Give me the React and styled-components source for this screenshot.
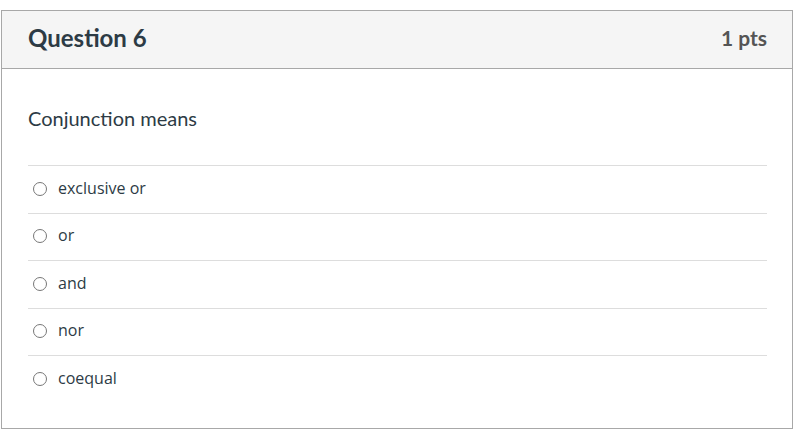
import React from 'react'
import styled, { createGlobalStyle } from 'styled-components'

const Global = createGlobalStyle`
  body {
    margin: 0;
    background: #fff;
    font-family: Lato, "Open Sans", sans-serif;
    color: #2d3b45;
  }
`

const Card = styled.div`
  margin: 10px 0 0 1px;
  width: 790px;
  border: 1px solid #a8a8a8;
`

const Header = styled.div`
  height: 57px;
  background: #f5f5f5;
  border-bottom: 1px solid #a8a8a8;
  display: flex;
  align-items: center;
  justify-content: space-between;
  padding: 0 25px 0 26px;
`

const Title = styled.h2`
  margin: 0 0 4px;
  font-size: 24px;
  font-weight: 700;
  color: #2d3b45;
`

const Points = styled.span`
  font-size: 21px;
  font-weight: 700;
  color: #555;
  margin-bottom: 4px;
`

const Body = styled.div`
  padding: 37px 25px 25px 26px;
`

const Question = styled.p`
  margin: 0 0 35px;
  font-size: 20px;
  line-height: 24px;
`

const Answers = styled.div`
  display: flex;
  flex-direction: column;
`

const Answer = styled.label`
  display: flex;
  align-items: center;
  gap: 11px;
  height: 47.5px;
  padding: 0 0 3px 5px;
  box-sizing: border-box;
  border-top: 1px solid #ddd;
  font-family: "Open Sans", sans-serif;
  font-size: 16px;
  cursor: pointer;
`

const Radio = styled.span`
  width: 12px;
  height: 12px;
  border-radius: 50%;
  border: 1px solid #777;
  flex-shrink: 0;
  margin-top: 2px;
`

const options = ['exclusive or', 'or', 'and', 'nor', 'coequal']

export default function App() {
  return (
    <>
      <Global />
      <Card>
        <Header>
          <Title>Question 6</Title>
          <Points>1 pts</Points>
        </Header>
        <Body>
          <Question>Conjunction means</Question>
          <Answers>
            {options.map((o) => (
              <Answer key={o}>
                <Radio />
                {o}
              </Answer>
            ))}
          </Answers>
        </Body>
      </Card>
    </>
  )
}
